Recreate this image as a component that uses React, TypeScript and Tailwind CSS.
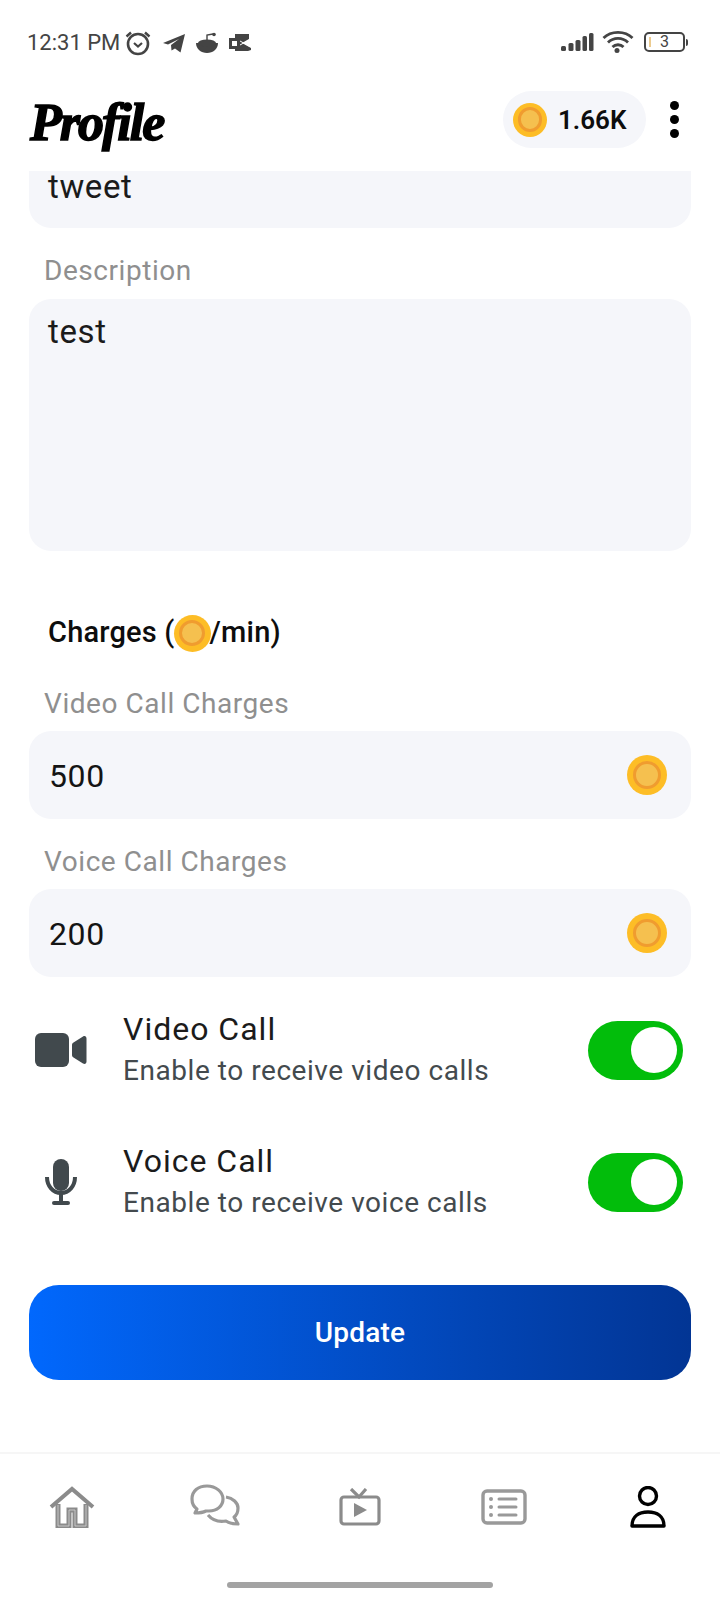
import type { ReactNode } from 'react';

const font = { fontFamily: 'Roboto, "Noto Sans", sans-serif' };

function Coin({ size }: { size: string }) {
  return (
    <span className={`${size} inline-flex shrink-0 items-center justify-center rounded-full bg-[#fdbd26]`}>
      <span className="h-[72%] w-[72%] rounded-full border-[3px] border-[#f09c2f] bg-[#f5c04f]" />
    </span>
  );
}

function StatusBar() {
  return (
    <div className="flex h-[86px] items-start justify-between pl-[27px] pr-[32px] pt-[30px] text-[#444]">
      <div className="flex items-center">
        <span className="text-[22px] leading-[24px]">12:31 PM</span>
        <svg className="ml-[4px]" width="28" height="26" viewBox="0 0 28 26" fill="none" stroke="#444">
          <circle cx="14" cy="14" r="10" strokeWidth="2.6" />
          <path d="M10 13l4 3.5 4-3.5" strokeWidth="2.2" />
          <path d="M2.5 6.5 7 2.5M25.5 6.5 21 2.5" strokeWidth="2.4" />
        </svg>
        <svg className="ml-[10px]" width="24" height="20" viewBox="0 0 24 20" fill="#444">
          <path d="M1 10 23 1l-4.500 18.500-5.500-4-3.500 2-.5-5.500L17 6 6 11.500z" />
        </svg>
        <svg className="ml-[9px]" width="24" height="22" viewBox="0 0 24 22" fill="#444">
          <path d="M1 11h22c0 6-5 10-11 10S1 17 1 11z" />
          <ellipse cx="12" cy="11" rx="9" ry="3.500" />
          <path d="M12 8V3l6-1" stroke="#444" strokeWidth="1.400" fill="none" />
          <circle cx="19" cy="2.500" r="1.800" />
        </svg>
        <svg className="ml-[9px]" width="24" height="20" viewBox="0 0 24 20">
          <path d="M7 1h14v5l-7 4 9 5v2l-3 1H7z" fill="#444" />
          <rect x="1" y="5" width="11" height="11" fill="#444" />
          <rect x="4" y="8" width="5" height="5" fill="#fff" />
          <path d="M12 8l9 5M12 12l9-5" stroke="#fff" strokeWidth="1" />
        </svg>
      </div>
      <div className="flex items-center">
        <svg width="33" height="20" viewBox="0 0 33 20" fill="#444">
          <rect x="0" y="14" width="5" height="5" rx="1.500" />
          <rect x="7.500" y="11" width="5" height="8" rx="1.500" />
          <rect x="14.500" y="8" width="5" height="11" rx="1.500" />
          <rect x="21.500" y="4" width="4.500" height="15" rx="1.500" />
          <rect x="28" y="1" width="4.500" height="18" rx="1.500" />
        </svg>
        <svg className="ml-[8px]" width="32" height="24" viewBox="0 0 32 24" fill="none" stroke="#444" strokeWidth="2.800">
          <path d="M1.500 8C9 0.500 23 0.500 30.500 8" />
          <path d="M6 12.500C11.500 7 20.500 7 26 12.500" />
          <path d="M10.500 17c3-3 8-3 11 0" />
          <circle cx="15" cy="20.500" r="2.500" fill="#444" stroke="none" />
        </svg>
        <span className="relative ml-[10px] flex h-[20px] w-[41px] items-center justify-center rounded-[5px] border-[2px] border-[#444] text-[16px] leading-none">
          <span className="absolute left-[3px] top-[3px] h-[10px] w-[2px] bg-[#eccb8f]" />
          3
        </span>
        <span className="ml-[1px] h-[7px] w-[2px] rounded-r bg-[#444]" />
      </div>
    </div>
  );
}

function Header() {
  return (
    <div className="flex h-[85px] items-start justify-between pl-[30px] pr-[41px] pt-[5px]">
      <span
        className="mt-[6px] text-[52px] font-bold italic leading-none tracking-[-2px] text-black [-webkit-text-stroke:1.5px_black]"
        style={{ fontFamily: '"Liberation Serif", serif' }}
      >
        Profile
      </span>
      <div className="flex items-center">
        <div className="flex h-[57px] w-[143px] items-center rounded-full bg-[#f5f6fa] pl-[10px]">
          <Coin size="h-[34px] w-[34px]" />
          <span className="ml-[11px] text-[26px] font-semibold leading-none text-[#0d0d0d]">1.66K</span>
        </div>
        <div className="ml-[24px] flex flex-col gap-[5px]">
          <span className="h-[9px] w-[9px] rounded-full bg-black" />
          <span className="h-[9px] w-[9px] rounded-full bg-black" />
          <span className="h-[9px] w-[9px] rounded-full bg-black" />
        </div>
      </div>
    </div>
  );
}

function ChargeField({ label, value }: { label: string; value: string }) {
  return (
    <div>
      <div className="ml-[15px] text-[28px] leading-[30px] tracking-[0.55px] text-[#8f8f8f]">{label}</div>
      <div className="mt-[12px] flex h-[88px] items-center justify-between rounded-[22px] bg-[#f5f6fa] pl-[20px] pr-[24px]">
        <span className="mt-[2px] text-[32px] leading-none tracking-[0.6px] text-[#141414]">{value}</span>
        <Coin size="h-[40px] w-[40px]" />
      </div>
    </div>
  );
}

function Toggle() {
  return (
    <div className="flex h-[59px] w-[95px] items-center justify-end rounded-full bg-[#02bd0b] pr-[6px]">
      <span className="h-[46px] w-[46px] rounded-full bg-white" />
    </div>
  );
}

function ToggleRow({ title, sub, icon }: { title: string; sub: string; icon: ReactNode }) {
  return (
    <div className="flex h-[132px] items-center">
      <div className="flex w-[64px] justify-center">{icon}</div>
      <div className="ml-[30px] flex-1">
        <div className="-mt-[2px] text-[32px] leading-[44px] tracking-[1px] text-[#1b1b1b]">{title}</div>
        <div className="text-[28px] leading-[40px] tracking-[0.55px] text-[#434a4e]">{sub}</div>
      </div>
      <div className="mr-[8px]">
        <Toggle />
      </div>
    </div>
  );
}

function BottomNav() {
  return (
    <div className="flex h-[148px] flex-col border-t-[2px] border-[#f6f6f6]">
      <div className="mt-[30px] grid h-[44px] grid-cols-5 items-center justify-items-center">
        <svg width="46" height="42" viewBox="0 0 46 42" fill="none" stroke="#8b8b8b">
          <path d="M2 21 23 3l21 18" strokeWidth="4" />
          <path d="M9 18v22h11V24h6v16h11V18" strokeWidth="5" />
          <path d="M9 19v21h11V24h6v16h11V19" strokeWidth="0.800" stroke="#d4d4d4" />
        </svg>
        <svg width="54" height="46" viewBox="0 0 54 46" fill="none" stroke="#999" strokeWidth="3.200">
          <path d="M18 2c-9 0-15 5-15 13 0 4 2 8 5 10l-2 4c6 0 9-1 11-2 1 0 2 0 3 0 8 0 14-5 14-12S27 2 18 2z" strokeLinejoin="round" />
          <path d="M37 13c7 1 12 6 12 11 0 4-1 7-4 9l4 7c-5 0-9-1-12-3-6 1-13 0-18-6" strokeLinejoin="round" />
        </svg>
        <svg width="42" height="38" viewBox="0 0 42 38" fill="none" stroke="#8b8b8b" strokeWidth="3.200">
          <rect x="2" y="9" width="38" height="27" rx="3" />
          <path d="M12 1l8 8 7-8" />
          <path d="M15 15l13 7-13 7z" fill="#8b8b8b" stroke="none" />
        </svg>
        <svg width="46" height="36" viewBox="0 0 46 36" fill="none" stroke="#999">
          <rect x="2" y="2" width="42" height="32" rx="4" strokeWidth="3.400" />
          <path d="M18 10h17M18 18h17M18 26h17" strokeWidth="3" strokeLinecap="round" />
          <circle cx="10" cy="10" r="2" fill="#999" stroke="none" />
          <circle cx="10" cy="18" r="2" fill="#999" stroke="none" />
          <circle cx="10" cy="26" r="2" fill="#999" stroke="none" />
        </svg>
        <svg width="36" height="42" viewBox="0 0 36 42" fill="none" stroke="#000" strokeWidth="3.400">
          <circle cx="18" cy="10" r="8.500" />
          <path d="M2 40c0-10 7-14 16-14s16 4 16 14z" strokeLinejoin="round" />
        </svg>
      </div>
      <div className="mt-auto mb-[12px] h-[6px] w-[266px] self-center rounded-full bg-[#a3a3a3]" />
    </div>
  );
}

export default function App() {
  return (
    <div className="flex h-[1600px] w-[720px] flex-col overflow-hidden bg-white" style={font}>
      <StatusBar />
      <Header />
      <div className="flex-1 overflow-hidden px-[29px]">
        <div className="-mt-[40px] flex h-[97px] items-start rounded-[22px] bg-[#f5f6fa] pl-[19px] pt-[41px]">
          <span className="text-[33px] leading-[30px] tracking-[0.6px] text-[#1b1b1b]">tweet</span>
        </div>
        <div className="ml-[15px] mt-[28px] text-[28px] leading-[30px] tracking-[0.55px] text-[#8f8f8f]">Description</div>
        <div className="mt-[13px] h-[252px] rounded-[22px] bg-[#f5f6fa] pl-[19px] pt-[10px]">
          <span className="text-[33px] leading-[46px] tracking-[0.6px] text-[#1b1b1b]">test</span>
        </div>
        <div className="ml-[19px] mt-[62px] flex h-[40px] items-center text-[29px] font-medium tracking-[0.2px] text-[#0d0d0d]">
          Charges (
          <Coin size="h-[37px] w-[37px] -mx-[1px]" />
          /min)
        </div>
        <div className="mt-[36px]">
          <ChargeField label="Video Call Charges" value="500" />
        </div>
        <div className="mt-[28px]">
          <ChargeField label="Voice Call Charges" value="200" />
        </div>
        <div className="mt-[7px]">
          <ToggleRow
            title="Video Call"
            sub="Enable to receive video calls"
            icon={
              <svg width="52" height="36" viewBox="0 0 52 36" fill="#41494d">
                <rect x="0" y="1" width="34" height="34" rx="6" />
                <path d="M37 13c0-1 .5-2 1.500-2.500L48 4.500c2-1 3.500 0 3.500 2v23c0 2-1.500 3-3.500 2l-9.500-6c-1-.5-1.500-1.500-1.500-2.500z" />
              </svg>
            }
          />
          <ToggleRow
            title="Voice Call"
            sub="Enable to receive voice calls"
            icon={
              <svg width="32" height="46" viewBox="0 0 32 46" fill="none" stroke="#41494d">
                <rect x="8" y="0" width="16" height="32" rx="8" fill="#41494d" stroke="none" />
                <path d="M2 18c0 9 6 16 14 16s14-7 14-16" strokeWidth="4" />
                <path d="M16 34v8" strokeWidth="4" />
                <path d="M9 44h14" strokeWidth="4" strokeLinecap="round" />
              </svg>
            }
          />
        </div>
        <div className="mt-[37px] flex h-[95px] items-center justify-center rounded-[30px] bg-gradient-to-r from-[#0168fd] to-[#023594] text-[28px] font-medium tracking-[0.2px] text-white">
          Update
        </div>
      </div>
      <BottomNav />
    </div>
  );
}
